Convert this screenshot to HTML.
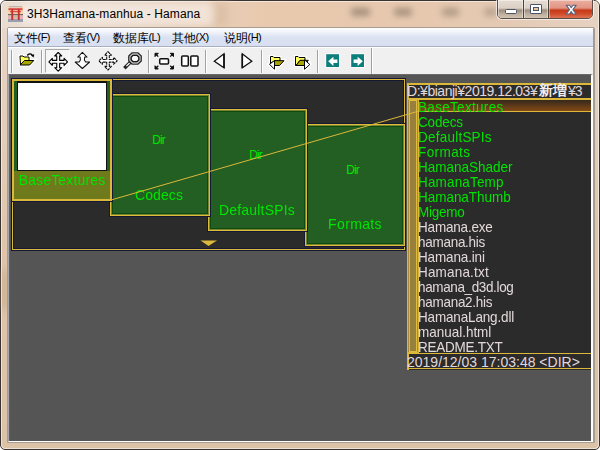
<!DOCTYPE html>
<html><head><meta charset="utf-8">
<style>
*{margin:0;padding:0;box-sizing:border-box}
html,body{width:600px;height:450px;overflow:hidden;background:#fff;font-family:"Liberation Sans",sans-serif}
.a{position:absolute}
#win{left:0;top:0;width:600px;height:450px;border:1px solid #3a3430;border-radius:6px 6px 5px 5px;
 background:linear-gradient(#eadcd0 0px,#e6d2c2 60px,#dfc4aa 250px,#dcc2a6 100%);overflow:hidden}
#title{left:27px;top:6px;letter-spacing:0.1px;font-size:12px;color:#000;white-space:pre;line-height:16px}
#client{left:7px;top:27px;width:586px;height:416px;background:#555;border:1px solid #a09890}
#menu{left:8px;top:28px;width:585px;height:19px;border-radius:1px 1px 0 0;background:linear-gradient(#fdfeff 0%,#f2f5fb 20%,#dbe2f2 50%,#d8dff1 100%);border-bottom:1px solid #a9b0c2}
.p{font-size:11px;letter-spacing:-0.6px;vertical-align:0.5px}
.mi{top:30px;letter-spacing:-0.2px;font-size:12px;line-height:14px;color:#000;white-space:pre}
#tool{left:8px;top:47px;width:585px;height:27px;background:#f0f0f0;border-top:1px solid #fff}
#client2{left:8px;top:74px;width:585px;height:368px;background:#555;border-top:1px solid #6a6a6a;border-left:1px solid #a4a6a8;border-right:2px solid #fff;border-bottom:1px solid #fff;box-shadow:inset 1px 0 0 #606060}
.sep{width:2px;border-left:1px solid #a0a0a0;border-right:1px solid #fff;top:50px;height:23px}
svg{position:absolute;overflow:visible}
/* thumbnail panel */
#tp{left:12px;top:79px;width:393px;height:171px;background:#2b2b2b;border:1px solid #dcb83a;box-shadow:0 0 0 1px #141832,inset 0 0 0 1px #141832}
.it{width:100px;height:122px;background:#235e22;border:1px solid #dcbc3c;box-shadow:0 0 0 1px #141832,inset 0 0 0 1px rgba(214,184,62,.55),inset 0 0 0 2px #0e4a12}
.cap{transform:scaleY(1.08);transform-origin:0 0;font-size:14px;line-height:16px;color:#00e400;white-space:pre;text-align:center;width:100%;left:0}
.dir{font-size:12px;letter-spacing:-0.9px;text-indent:-1px;line-height:12px;color:#00e400;text-align:center;width:100%;left:0}
/* list */
#lp{left:407px;top:83px;width:184px;height:287px;background:#2b2b2b;border-top:2px solid #dcb83a;border-left:2px solid #dcb83a}
.li{left:418px;font-size:13.5px;line-height:15px;white-space:pre;transform:scaleY(1.12);transform-origin:0 0}
.hd{font-size:14px;line-height:14px;white-space:pre}
.g{color:#00e400}
.w{color:#e2d8da}
</style></head><body>
<div id="win" class="a"></div>
<div class="a" style="left:1px;top:1px;width:598px;height:27px;border-radius:5px 5px 0 0;background:linear-gradient(90deg,#e9ddd2 0%,#e6d2c0 25%,#e8c9ae 45%,#e6c8ae 70%,#e4cab4 85%,#e6d2c2 100%)"></div>
<div class="a" style="left:1px;top:270px;width:7px;height:40px;background:#b89878;filter:blur(4px);opacity:.5"></div>
<div class="a" style="left:1px;top:1px;width:598px;height:448px;border:1px solid rgba(255,255,255,.55);border-radius:5px 5px 4px 4px"></div>
<!-- blurred glass spots -->
<div class="a" style="left:18px;top:3px;width:198px;height:22px;background:rgba(250,242,236,.6);filter:blur(3px);border-radius:9px"></div>
<div class="a" style="left:214px;top:2px;width:14px;height:24px;background:#d6b89c;filter:blur(4px);opacity:.6"></div>
<div class="a" style="left:351px;top:8px;width:19px;height:8px;background:#8e7c6c;filter:blur(3px);opacity:.75;border-radius:3px"></div>
<div class="a" style="left:394px;top:8px;width:18px;height:8px;background:#8e7c6c;filter:blur(3px);opacity:.7;border-radius:3px"></div>
<div class="a" style="left:442px;top:8px;width:17px;height:8px;background:#8e7c6c;filter:blur(3px);opacity:.6;border-radius:3px"></div>
<div class="a" style="left:484px;top:8px;width:14px;height:8px;background:#8e7c6c;filter:blur(3px);opacity:.5;border-radius:3px"></div>
<!-- title icon -->
<svg style="left:8px;top:6px" width="15" height="16" viewBox="0 0 15 16">
<rect x="0" y="0" width="15" height="16" fill="#f0c8a8"/>
<rect x="0" y="0" width="15" height="8" fill="#f8d4a8"/>
<rect x="1" y="0" width="13" height="1.2" fill="#b8b4c4"/>
<rect x="0" y="8" width="15" height="1.4" fill="#686868"/>
<rect x="0" y="9.4" width="15" height="3.6" fill="#e4b4b8"/>
<rect x="0" y="13" width="15" height="3" fill="#98a0b0"/>
<rect x="0.5" y="2.2" width="14" height="2" fill="#d84848"/>
<rect x="2" y="5" width="11" height="1.3" fill="#d85050"/>
<rect x="6" y="9.8" width="3" height="1.2" fill="#a8c890"/>
<rect x="3.3" y="3" width="1.9" height="11" fill="#c83030"/>
<rect x="9.8" y="3" width="1.9" height="11" fill="#c83030"/>
</svg>
<!-- caption buttons -->
<div class="a" style="left:497px;top:-1px;width:96px;height:20px;border:1px solid #5a4e46;border-radius:0 0 5px 5px;overflow:hidden;box-shadow:0 0 0 1px rgba(255,255,255,.6)">
 <div class="a" style="left:0;top:0;width:26px;height:19px;background:linear-gradient(#e6dcd2 0%,#dcd0c4 42%,#9e8e7e 54%,#bcac9c 72%,#d8c8b8 100%);border-right:1px solid #4a403a;box-shadow:inset 0 0 0 1px rgba(255,255,255,.45)"></div>
 <div class="a" style="left:26px;top:0;width:25px;height:19px;background:linear-gradient(#e6dcd2 0%,#dcd0c4 42%,#9e8e7e 54%,#bcac9c 72%,#d8c8b8 100%);border-right:1px solid #4a403a;box-shadow:inset 0 0 0 1px rgba(255,255,255,.45)"></div>
 <div class="a" style="left:51px;top:0;width:45px;height:19px;background:linear-gradient(#eab0a0 0%,#e29484 42%,#c63818 54%,#d04a28 72%,#e07c60 100%);box-shadow:inset 0 0 0 1px rgba(255,255,255,.4)"></div>
</div>
<div class="a" style="left:505px;top:9px;width:12px;height:5px;background:#fff;border:1px solid #4a5468;border-radius:1.5px"></div>
<div class="a" style="left:530px;top:4px;width:12px;height:10px;background:#fff;border:1px solid #4a5468;border-radius:1px"></div>
<div class="a" style="left:533px;top:7px;width:6px;height:4px;background:#e0c8a0;border:1px solid #4a5468"></div>
<svg style="left:563px;top:2px" width="16" height="15" viewBox="0 0 16 15"><path transform="translate(3.2,3.2)" d="M0 0 H3.3 L5 2.5 L6.7 0 H10 L6.7 4.4 L10 8.8 H6.7 L5 6.3 L3.3 8.8 H0 L3.3 4.4 Z" fill="#fff" stroke="#56607a" stroke-width="1.1" stroke-linejoin="round"/></svg>
<!-- client frame -->
<div class="a" style="left:7px;top:27px;width:588px;height:416px;border:1px solid #a89c90;border-radius:2px 2px 0 0;background:#fff;box-shadow:inset -1px 0 0 #a89c90"></div>
<div id="menu" class="a"></div>
<div class="a mi" style="left:14px">文件<span class="p">(F)</span></div>
<div class="a mi" style="left:63px">查看<span class="p">(V)</span></div>
<div class="a mi" style="left:113px">数据库<span class="p">(L)</span></div>
<div class="a mi" style="left:172px">其他<span class="p">(X)</span></div>
<div class="a mi" style="left:224px">说明<span class="p">(H)</span></div>
<div id="tool" class="a"></div>
<div class="a sep" style="left:11px"></div>
<div class="a sep" style="left:41px"></div>
<div class="a sep" style="left:148px"></div>
<div class="a sep" style="left:205px"></div>
<div class="a sep" style="left:261px"></div>
<div class="a sep" style="left:317px"></div>
<div class="a sep" style="left:371px;top:48px;height:26px"></div>
<!-- pressed button -->
<div class="a" style="left:45px;top:49px;width:25px;height:24px;background:#f6f6f6;border:1px solid;border-color:#a8a8a8 #fcfcfc #fcfcfc #a8a8a8"></div>
<div id="client2" class="a"></div>
<svg style="left:0;top:0" width="600" height="80" viewBox="0 0 600 80">
<g stroke-linejoin="miter">
<!-- open folder with arrow -->
<g transform="translate(19,53)">
 <path d="M1 3 H4 L5 4 H10 V8 L14.8 7.5 L10.6 12 H1 Z" fill="none" stroke="#fff" stroke-width="3"/>
 <path d="M1 3 H4 L5 4 H10 V8 H5.5 L1.5 12 Z" fill="#ffff60" stroke="#000" stroke-width="1"/>
 <path d="M1 12 L5.5 7.5 H14.8 L10.6 12 Z" fill="#a8a400" stroke="#000" stroke-width="1"/>
 <path d="M8.3 2.5 Q10.5 -0.5 13.3 1.8" fill="none" stroke="#000" stroke-width="1.3"/>
 <path d="M11.8 2.3 L15.3 1.2 L14.6 4.6 Z" fill="#000"/>
</g>
<!-- move cross -->
<path transform="translate(58.2,61.8)" d="M0.00 -9.30 L3.50 -5.90 L1.45 -5.90 L1.45 -1.45 L5.90 -1.45 L5.90 -3.50 L9.30 0.00 L5.90 3.50 L5.90 1.45 L1.45 1.45 L1.45 5.90 L3.50 5.90 L0.00 9.30 L-3.50 5.90 L-1.45 5.90 L-1.45 1.45 L-5.90 1.45 L-5.90 3.50 L-9.30 0.00 L-5.90 -3.50 L-5.90 -1.45 L-1.45 -1.45 L-1.45 -5.90 L-3.50 -5.90 Z" fill="#fff" stroke="#000" stroke-width="1.1" stroke-linejoin="round"/>
<!-- up/down -->
<path d="M82.4 52.3 L87 57 L84.7 57 L84.4 60 L85.6 62 L89.6 62 L82.4 68.5 L75.2 62 L79.2 62 L80.4 60 L80.1 57 L77.8 57 Z" fill="#fff" stroke="#111" stroke-width="1.05" stroke-linejoin="round"/>
<!-- diagonal move -->
<path transform="translate(108,60.8)" d="M0.00 -9.20 L3.40 -5.60 L1.30 -5.60 L1.30 -1.30 L5.60 -1.30 L5.60 -3.40 L9.20 0.00 L5.60 3.40 L5.60 1.30 L1.30 1.30 L1.30 5.60 L3.40 5.60 L0.00 9.20 L-3.40 5.60 L-1.30 5.60 L-1.30 1.30 L-5.60 1.30 L-5.60 3.40 L-9.20 0.00 L-5.60 -3.40 L-5.60 -1.30 L-1.30 -1.30 L-1.30 -5.60 L-3.40 -5.60 Z" fill="#fff" stroke="#111" stroke-width="1.1" stroke-linejoin="round" stroke-dasharray="3 0.6"/>
<!-- magnifier -->
<path d="M125.6 67 L130 62.6" stroke="#222" stroke-width="3.4" stroke-linecap="square"/>
<path d="M126.4 66.2 L129.6 63" stroke="#fff" stroke-width="1.2"/>
<path d="M132 52.9 H138 L141.2 56 V61 L138 64.1 H132 L128.8 61 V56 Z" fill="#f4f4f4" stroke="#2a2a2a" stroke-width="1.4"/>
<path d="M133 55.3 H137 L138.9 57.1 V59.9 L137 61.7 H133 L131.1 59.9 V57.1 Z" fill="#f8f8f8" stroke="#1a1a1a" stroke-width="1.5"/>
<!-- fit -->
<g fill="#111" stroke="#111" stroke-width="1">
<path d="M155 53.3 L158.3 53.3 L155 56.6 Z"/><path d="M155.2 53.5 L158.3 56.6" stroke-width="1.3"/>
<path d="M173.5 53.3 L170.2 53.3 L173.5 56.6 Z"/><path d="M173.3 53.5 L170.2 56.6" stroke-width="1.3"/>
<path d="M155 69 L158.3 69 L155 65.7 Z"/><path d="M155.2 68.8 L158.3 65.7" stroke-width="1.3"/>
<path d="M173.5 69 L170.2 69 L173.5 65.7 Z"/><path d="M173.3 68.8 L170.2 65.7" stroke-width="1.3"/>
</g>
<rect x="159.7" y="58.7" width="8.8" height="5.4" rx="1" fill="#fff" stroke="#111" stroke-width="1.5"/>
<!-- two pages -->
<rect x="181.7" y="55.9" width="6.6" height="10.2" rx="1" fill="#fff" stroke="#111" stroke-width="1.5"/>
<rect x="190.8" y="55.9" width="7.2" height="10.2" rx="1" fill="#fff" stroke="#111" stroke-width="1.5"/>
<!-- triangles -->
<path d="M214.3 61.2 L224 53.8 V67.8 Z" fill="#fff" stroke="#111" stroke-width="1.3"/>
<path d="M224 54 V68" stroke="#111" stroke-width="1.6"/>
<path d="M251.8 61.2 L242.3 53.8 V67.8 Z" fill="#fff" stroke="#111" stroke-width="1.3"/>
<path d="M242.3 54 V68" stroke="#111" stroke-width="1.6"/>
<!-- folder prev -->
<g>
 <path d="M270.5 56.5 H273 L274 57.5 H280 V60.5 H284 L279.5 65.5 H274.5 V69.5 L269 64.3 L270.5 63 Z" fill="none" stroke="#fff" stroke-width="3"/>
 <path d="M270.5 56.5 H273 L274 57.5 H280 V61 H275 L270.5 63 Z" fill="#ffff60" stroke="#000" stroke-width="1"/>
 <path d="M274.5 60.7 H284 L279.5 65.5 H274.5 Z" fill="#a8a400" stroke="#000" stroke-width="1"/>
 <path d="M269.5 64.3 L274.5 60.5 V69.2 Z" fill="#fff" stroke="#000" stroke-width="1"/>
</g>
<!-- folder next -->
<g>
 <path d="M295.5 56.5 H298 L299 57.5 H305 V60 H308.5 L309.8 64.4 L304.5 69.5 V65.5 H295.5 Z" fill="none" stroke="#fff" stroke-width="3"/>
 <path d="M295.5 56.5 H298 L299 57.5 H305 V60.5 H300 L296 65.5 H295.5 Z" fill="#ffff60" stroke="#000" stroke-width="1"/>
 <path d="M296 65.5 L300 60.3 H308.3 L304.5 65.5 Z" fill="#a8a400" stroke="#000" stroke-width="1"/>
 <path d="M309.8 64.5 L304.5 59.8 V69.3 Z" fill="#fff" stroke="#000" stroke-width="1"/>
</g>
<!-- teal arrows -->
<rect x="325.5" y="53.5" width="14.3" height="14.3" rx="1" fill="#fff"/>
<rect x="326.2" y="54.2" width="12.8" height="12.8" fill="#0c7f7c"/>
<path d="M328.2 61.3 L333.4 56.8 V59.6 H337.4 V63.1 H333.4 V65.9 Z" fill="#fff"/>
<rect x="350.5" y="53.5" width="14.3" height="14.3" rx="1" fill="#fff"/>
<rect x="351.2" y="54.2" width="12.8" height="12.8" fill="#0c7f7c"/>
<path d="M362.8 61.3 L357.6 56.8 V59.6 H353.6 V63.1 H357.6 V65.9 Z" fill="#fff"/>
</g>
</svg>
<div id="title" class="a">3H3Hamana-manhua - Hamana</div>

<!-- thumbnail panel -->
<div id="tp" class="a"></div>
<div class="a it" style="left:305px;top:124px;width:100px"></div>
<div class="a dir" style="left:303px;top:164px;width:100px">Dir</div>
<div class="a cap" style="left:305px;top:215px;width:100px;letter-spacing:0.35px">Formats</div>
<div class="a it" style="left:208px;top:109px;width:99px"></div>
<div class="a dir" style="left:206px;top:149px;width:100px">Dir</div>
<div class="a cap" style="left:207px;top:201px;width:100px;letter-spacing:0.2px">DefaultSPIs</div>
<div class="a it" style="left:110px;top:94px"></div>
<div class="a dir" style="left:109px;top:134px;width:100px">Dir</div>
<div class="a cap" style="left:109px;top:186px;width:100px;letter-spacing:0.1px">Codecs</div>
<div class="a" style="left:12px;top:79px;width:100px;height:122px;background:#6e7a1c;border:2px solid #dcb83a;box-shadow:0 0 0 1px #141832"></div>
<div class="a" style="left:14px;top:81px;width:96px;height:90px;background:#235e22"></div>
<div class="a" style="left:17px;top:81px;width:90px;height:90px;background:#fff;border:solid #111;border-width:2px 1px 1px 1px"></div>
<div class="a cap" style="left:12px;top:171px;width:100px;letter-spacing:0.15px">BaseTextures</div>

<!-- down marker -->
<svg style="left:200px;top:240px" width="18" height="7"><path d="M0.5 0.5 H17 L8.5 6 Z" fill="#dcb83a"/></svg>

<!-- list panel -->
<div id="lp" class="a"></div>
<div class="a" style="left:407px;top:98px;width:184px;height:2px;background:#dcb83a"></div>
<div class="a hd w" style="left:407px;top:84px;letter-spacing:-0.47px">D:¥bianji¥2019.12.03¥</div>
<div class="a hd w" style="left:539px;top:83px;font-size:14px;letter-spacing:-0.3px;font-weight:bold;color:#f0eef0">新増</div>
<div class="a hd w" style="left:568px;top:84px;letter-spacing:-1px">¥3</div>
<div class="a" style="left:419px;top:100px;width:172px;height:12px;background:linear-gradient(#35281c,#8a4c14)"></div>
<div class="a" style="left:419px;top:111px;width:172px;height:1px;background:#dcb83a"></div>
<div class="a" style="left:407px;top:99px;width:12px;height:254px;background:#a88c3a;border:1px solid #dcb83a"></div>
<div class="a" style="left:409px;top:100px;width:8px;height:252px;background:#97803e;border:1px solid #e0bc40"></div>
<div class="a li g" style="margin-top:0.2px;top:99px;letter-spacing:0.31px">BaseTextures</div>
<div class="a li g" style="margin-top:0.2px;top:114px;letter-spacing:-0.14px">Codecs</div>
<div class="a li g" style="margin-top:0.2px;top:129px;letter-spacing:0.23px">DefaultSPIs</div>
<div class="a li g" style="margin-top:0.2px;top:144px;letter-spacing:0.41px">Formats</div>
<div class="a li g" style="margin-top:0.2px;top:159px;letter-spacing:0px">HamanaShader</div>
<div class="a li g" style="margin-top:0.2px;top:174px;letter-spacing:0.16px">HamanaTemp</div>
<div class="a li g" style="margin-top:0.2px;top:189px;letter-spacing:-0.03px">HamanaThumb</div>
<div class="a li g" style="margin-top:0.2px;top:204px;letter-spacing:-0.24px">Migemo</div>
<div class="a li w" style="margin-top:0.2px;top:219px;letter-spacing:-0.19px">Hamana.exe</div>
<div class="a li w" style="margin-top:0.2px;top:234px;letter-spacing:-0.28px">hamana.his</div>
<div class="a li w" style="margin-top:0.2px;top:249px;letter-spacing:-0.15px">Hamana.ini</div>
<div class="a li w" style="margin-top:0.2px;top:264px;letter-spacing:0.18px">Hamana.txt</div>
<div class="a li w" style="margin-top:0.2px;top:279px;letter-spacing:-0.37px">hamana_d3d.log</div>
<div class="a li w" style="margin-top:0.2px;top:294px;letter-spacing:-0.28px">hamana2.his</div>
<div class="a li w" style="margin-top:0.2px;top:309px;letter-spacing:-0.16px">HamanaLang.dll</div>
<div class="a li w" style="margin-top:0.2px;top:324px;letter-spacing:-0.02px">manual.html</div>
<div class="a li w" style="margin-top:0.2px;top:339px;letter-spacing:-0.25px">README.TXT</div>
<div class="a" style="left:407px;top:353px;width:184px;height:1px;background:#dcb83a"></div>
<div class="a hd w" style="left:407px;top:355px">2019/12/03 17:03:48 &lt;DIR&gt;</div>
<div class="a" style="left:407px;top:368px;width:184px;height:1px;background:#dcb83a"></div>

<!-- connector line -->
<svg style="left:0;top:0" width="600" height="450"><line x1="111" y1="200" x2="419" y2="111" stroke="#dcb83a" stroke-width="1"/></svg>
</body></html>
